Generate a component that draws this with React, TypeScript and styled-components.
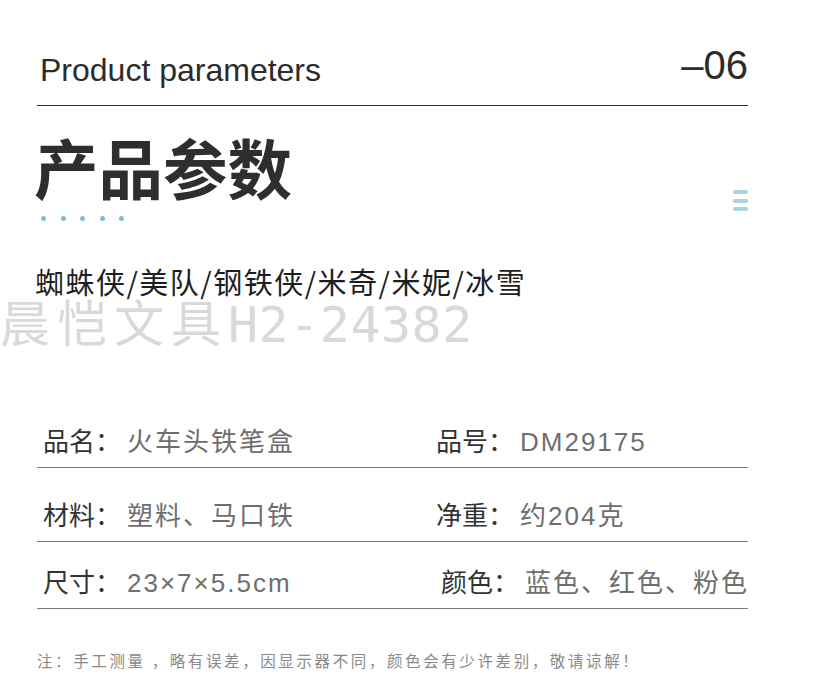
import styled, { createGlobalStyle } from 'styled-components';

const GlobalStyle = createGlobalStyle`
  html, body {
    margin: 0;
    padding: 0;
    background: #ffffff;
  }
  body {
    font-family: "Liberation Sans", "Noto Sans CJK SC", sans-serif;
  }
`;

const Page = styled.div`
  width: 814px;
  height: 692px;
  box-sizing: border-box;
  padding: 0 66px 0 37px;
  overflow: hidden;
  background: #fff;
`;

const Header = styled.div`
  height: 106px;
  display: flex;
  align-items: flex-end;
  justify-content: space-between;
  border-bottom: 1px solid #2e2e2e;
  padding-left: 3px;
  padding-bottom: 19px;
  box-sizing: border-box;
`;

const EnTitle = styled.div`
  font-family: "Liberation Sans", sans-serif;
  font-size: 32px;
  line-height: 1;
  color: #2b2b2b;
`;

const PageNo = styled.div`
  font-family: "Liberation Sans", sans-serif;
  font-size: 40px;
  line-height: 1;
  color: #2b2b2b;
  margin-bottom: 1px;
`;

const TitleBlock = styled.div`
  display: flex;
  align-items: flex-end;
  justify-content: space-between;
  margin-top: 20px;
`;

const CnTitle = styled.h1`
  margin: 0 0 0 -3px;
  font-family: "Noto Sans CJK SC", sans-serif;
  font-weight: 700;
  font-size: 64.5px;
  line-height: 80px;
  color: #2e2e2e;
`;

const Dots = styled.div`
  display: flex;
  gap: 14.5px;
  padding-left: 4px;
  margin-top: 10px;
`;

const Dot = styled.span`
  width: 5px;
  height: 5px;
  border-radius: 50%;
  background: #7dbfd4;
`;

const Menu = styled.div`
  display: flex;
  flex-direction: column;
  gap: 4.5px;
  margin-bottom: 10px;
`;

const Bar = styled.span`
  width: 15px;
  height: 4px;
  border-radius: 2px;
  background: #a9d3e0;
`;

const Characters = styled.div`
  margin: 44px 0 0 -2px;
  font-family: "Noto Sans CJK SC", sans-serif;
  font-size: 29px;
  line-height: 32px;
  letter-spacing: 1.5px;
  color: #1e1e1e;
`;

const Watermark = styled.div`
  margin-left: -37px;
  font-family: "DejaVu Sans Mono", "Noto Sans CJK SC", monospace;
  font-size: 50px;
  line-height: 56px;
  letter-spacing: 0.5px;
  color: #d9d9d9;
  white-space: nowrap;
`;

const WideCjk = styled.span`
  letter-spacing: 7px;
`;

const Table = styled.div`
  margin-top: 57px;
`;

const Row = styled.div<{ h: number }>`
  display: grid;
  grid-template-columns: 393px 1fr;
  align-items: end;
  height: ${(p) => p.h}px;
  padding: 0 0 7px 6px;
  box-sizing: border-box;
  border-bottom: 1px solid #7c7c7c;
`;

const Cell = styled.div<{ shift?: number }>`
  display: flex;
  align-items: baseline;
  gap: 6px;
  padding-left: ${(p) => p.shift ?? 0}px;
  font-family: "Noto Sans CJK SC", sans-serif;
  font-size: 26px;
  line-height: 36px;
  white-space: nowrap;
`;

const Label = styled.span`
  color: #333;
`;

const Value = styled.span`
  color: #6e6e6e;
  letter-spacing: 2px;
  font-family: "Liberation Sans", "Noto Sans CJK SC", sans-serif;
`;

const Note = styled.div`
  margin-top: 41px;
  font-family: "Noto Sans CJK SC", sans-serif;
  font-size: 15.5px;
  line-height: 20px;
  letter-spacing: 2.6px;
  color: #8a8a8a;
  white-space: nowrap;
`;

const rows = [
  { h: 58, left: ['品名：', '火车头铁笔盒'], right: ['品号：', 'DM29175'], shift: 0 },
  { h: 74, left: ['材料：', '塑料、马口铁'], right: ['净重：', '约204克'], shift: 0 },
  { h: 67, left: ['尺寸：', '23×7×5.5cm'], right: ['颜色：', '蓝色、红色、粉色'], shift: 5 },
];

export default function App(): JSX.Element {
  return (
    <>
      <GlobalStyle />
      <Page>
        <Header>
          <EnTitle>Product parameters</EnTitle>
          <PageNo>–06</PageNo>
        </Header>
        <TitleBlock>
          <div>
            <CnTitle>产品参数</CnTitle>
            <Dots>
              {[0, 1, 2, 3, 4].map((i) => (
                <Dot key={i} />
              ))}
            </Dots>
          </div>
          <Menu>
            <Bar />
            <Bar />
            <Bar />
          </Menu>
        </TitleBlock>
        <Characters>蜘蛛侠/美队/钢铁侠/米奇/米妮/冰雪</Characters>
        <Watermark>
          <WideCjk>晨恺文具</WideCjk>H2-24382
        </Watermark>
        <Table>
          {rows.map((r, ind) => (
            <Row key={ind} h={r.h}>
              <Cell>
                <Label>{r.left[0]}</Label>
                <Value>{r.left[1]}</Value>
              </Cell>
              <Cell shift={r.shift}>
                <Label>{r.right[0]}</Label>
                <Value>{r.right[1]}</Value>
              </Cell>
            </Row>
          ))}
        </Table>
        <Note>注：手工测量 ，略有误差，因显示器不同，颜色会有少许差别，敬请谅解！</Note>
      </Page>
    </>
  );
}
